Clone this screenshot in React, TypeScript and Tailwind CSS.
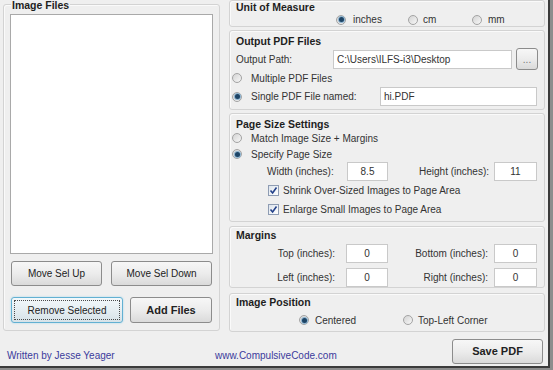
import React from "react";

const Radio: React.FC<{ checked?: boolean }> = ({ checked }) => (
  <div className="w-[10px] h-[10px] shrink-0 rounded-full border border-[#a3a3a3] bg-gradient-to-br from-[#d4d4d4] to-[#f7f7f7] flex items-center justify-center">
    {checked && (
      <div className="w-[5px] h-[5px] rounded-full bg-[#1d4466] shadow-[0_0_0_1px_#8db3cf]" />
    )}
  </div>
);

const Check: React.FC = () => (
  <div className="w-[11px] h-[11px] shrink-0 border border-[#8e9cb3] bg-gradient-to-br from-[#dde4ec] to-[#ffffff] flex items-center justify-center">
    <svg width="9" height="9" viewBox="0 0 9 9">
      <path d="M1.5 4.5 L3.6 7 L7.5 1.5" fill="none" stroke="#23418a" strokeWidth="1.6" />
    </svg>
  </div>
);

const Field: React.FC<{ value: string; className: string; center?: boolean }> = ({
  value,
  className,
  center,
}) => (
  <div
    className={
      "bg-white border border-[#c9c9c9] flex items-center text-[10px] text-[#333] " +
      (center ? "justify-center " : "pl-[3px] ") +
      className
    }
  >
    {value}
  </div>
);

const Button: React.FC<{ label: string; className: string; bold?: boolean }> = ({
  label,
  className,
  bold,
}) => (
  <div
    className={
      "border border-[#8c8c8c] rounded-[3px] bg-gradient-to-b from-[#f7f7f7] via-[#ececec] to-[#dadada] flex items-center justify-center text-[#222] " +
      (bold ? "font-bold text-[11px] " : "text-[10px] ") +
      className
    }
  >
    {label}
  </div>
);

const Group: React.FC<{ title: string; className: string; children?: React.ReactNode }> = ({
  title,
  className,
  children,
}) => (
  <div
    className={
      "w-[316px] border border-[#d3d3d3] rounded-[3px] shadow-[inset_1px_1px_0_#fafafa] flex flex-col " +
      className
    }
  >
    <div className="pl-[6px] text-[10.5px] leading-[12px] font-bold text-[#1e1e1e]">{title}</div>
    {children}
  </div>
);

export default function App() {
  return (
    <div className="w-[553px] h-[370px] bg-[#8d8d8d] font-['Liberation_Sans',Arial,sans-serif] text-[10px] text-[#333]">
      <div className="w-[550px] h-[368px] bg-[#efefef] border-r-2 border-b-2 border-[#3b3b3b] flex flex-col">
        <div className="flex h-[333px] pl-[3px]">
          {/* image files */}
          <div className="w-[217px] h-[327px] mt-[4px] border border-[#d3d3d3] rounded-[3px] shadow-[inset_1px_1px_0_#fafafa] flex flex-col">
            <div className="-mt-[6px] ml-[7px] px-[1px] w-fit bg-[#efefef] text-[10.5px] leading-[12px] font-bold text-[#1e1e1e]">
              Image Files
            </div>
            <div className="ml-[6px] mt-[3px] w-[203px] h-[240px] bg-white border border-[#a9a9a9]" />
            <div className="flex ml-[7px] mt-[7px] gap-[9px]">
              <Button label="Move Sel Up" className="w-[91px] h-[25px]" />
              <Button label="Move Sel Down" className="w-[101px] h-[25px]" />
            </div>
            <div className="flex ml-[7px] mt-[11px] gap-[7px]">
              <div className="w-[112px] h-[26px] rounded-[3px] border border-[#62b0d2] bg-gradient-to-b from-[#f2f8fb] via-[#e6eef2] to-[#d6e2e8] shadow-[0_0_2px_#9fd3ea] p-[2px]">
                <div className="w-full h-full border border-dotted border-[#4a4a4a] flex items-center justify-center text-[10px] text-[#222]">
                  Remove Selected
                </div>
              </div>
              <Button label="Add Files" bold className="w-[82px] h-[26px]" />
            </div>
          </div>

          {/* settings */}
          <div className="ml-[9px] flex flex-col">
            <Group title="Unit of Measure" className="h-[27px]">
              <div className="flex items-center h-[13px] pl-[106px]">
                <div className="w-[72px] flex items-center">
                  <Radio checked />
                  <span className="ml-[7px]">inches</span>
                </div>
                <div className="w-[64px] flex items-center">
                  <Radio />
                  <span className="ml-[5px]">cm</span>
                </div>
                <div className="flex items-center">
                  <Radio />
                  <span className="ml-[6px]">mm</span>
                </div>
              </div>
            </Group>

            <Group title="Output PDF Files" className="h-[80px] mt-[3px] pt-[4px]">
              <div className="flex items-center h-[22px] mt-[1px] pl-[6px]">
                <span className="w-[97px]">Output Path:</span>
                <Field value="C:\Users\ILFS-i3\Desktop" className="w-[179px] h-[19px]" />
                <Button label="..." className="w-[22px] h-[22px] ml-[4px] text-[#777]" />
              </div>
              <div className="flex items-center h-[16px] pl-[2px]">
                <Radio />
                <span className="ml-[9px]">Multiple PDF Files</span>
              </div>
              <div className="flex items-center h-[19px] mt-[1px] pl-[2px]">
                <Radio checked />
                <span className="ml-[9px] w-[129px]">Single PDF File named:</span>
                <Field value="hi.PDF" className="w-[157px] h-[19px]" />
              </div>
            </Group>

            <Group title="Page Size Settings" className="h-[109px] mt-[3px] pt-[4px]">
              <div className="flex items-center h-[16px] pl-[2px]">
                <Radio />
                <span className="ml-[9px]">Match Image Size + Margins</span>
              </div>
              <div className="flex items-center h-[16px] pl-[2px]">
                <Radio checked />
                <span className="ml-[9px]">Specify Page Size</span>
              </div>
              <div className="flex items-center h-[19px] pl-[37px]">
                <span className="w-[80px]">Width (inches):</span>
                <Field value="8.5" center className="w-[41px] h-[19px]" />
                <span className="ml-[31px] w-[75px]">Height (inches):</span>
                <Field value="11" center className="w-[43px] h-[19px]" />
              </div>
              <div className="flex items-center h-[19px] pl-[38px]">
                <Check />
                <span className="ml-[4px]">Shrink Over-Sized Images to Page Area</span>
              </div>
              <div className="flex items-center h-[19px] pl-[38px]">
                <Check />
                <span className="ml-[4px]">Enlarge Small Images to Page Area</span>
              </div>
            </Group>

            <Group title="Margins" className="h-[62px] mt-[4px] pt-[2px]">
              <div className="flex items-center h-[19px] mt-[3px]">
                <span className="w-[105px] text-right">Top (inches):</span>
                <Field value="0" center className="w-[42px] h-[19px] ml-[11px]" />
                <span className="w-[100px] text-right">Bottom (inches):</span>
                <Field value="0" center className="w-[43px] h-[19px] ml-[6px]" />
              </div>
              <div className="flex items-center h-[19px] mt-[5px]">
                <span className="w-[105px] text-right">Left (inches):</span>
                <Field value="0" center className="w-[42px] h-[19px] ml-[11px]" />
                <span className="w-[100px] text-right">Right (inches):</span>
                <Field value="0" center className="w-[43px] h-[19px] ml-[6px]" />
              </div>
            </Group>

            <Group title="Image Position" className="h-[39px] mt-[5px] pt-[2px]">
              <div className="flex items-center h-[14px] mt-[5px] pl-[69px]">
                <div className="w-[104px] flex items-center">
                  <Radio checked />
                  <span className="ml-[6px]">Centered</span>
                </div>
                <div className="flex items-center">
                  <Radio />
                  <span className="ml-[5px]">Top-Left Corner</span>
                </div>
              </div>
            </Group>
          </div>
        </div>

        {/* footer */}
        <div className="flex h-[33px]">
          <span className="self-end mb-[4px] pl-[7px] w-[215px] text-[#3b3b9c] leading-[12px]">
            Written by Jesse Yeager
          </span>
          <span className="self-end mb-[4px] text-[#3b3b9c] leading-[12px]">
            www.CompulsiveCode.com
          </span>
          <Button label="Save PDF" bold className="ml-auto mr-[5px] mt-[6px] w-[91px] h-[25px]" />
        </div>
      </div>
    </div>
  );
}
